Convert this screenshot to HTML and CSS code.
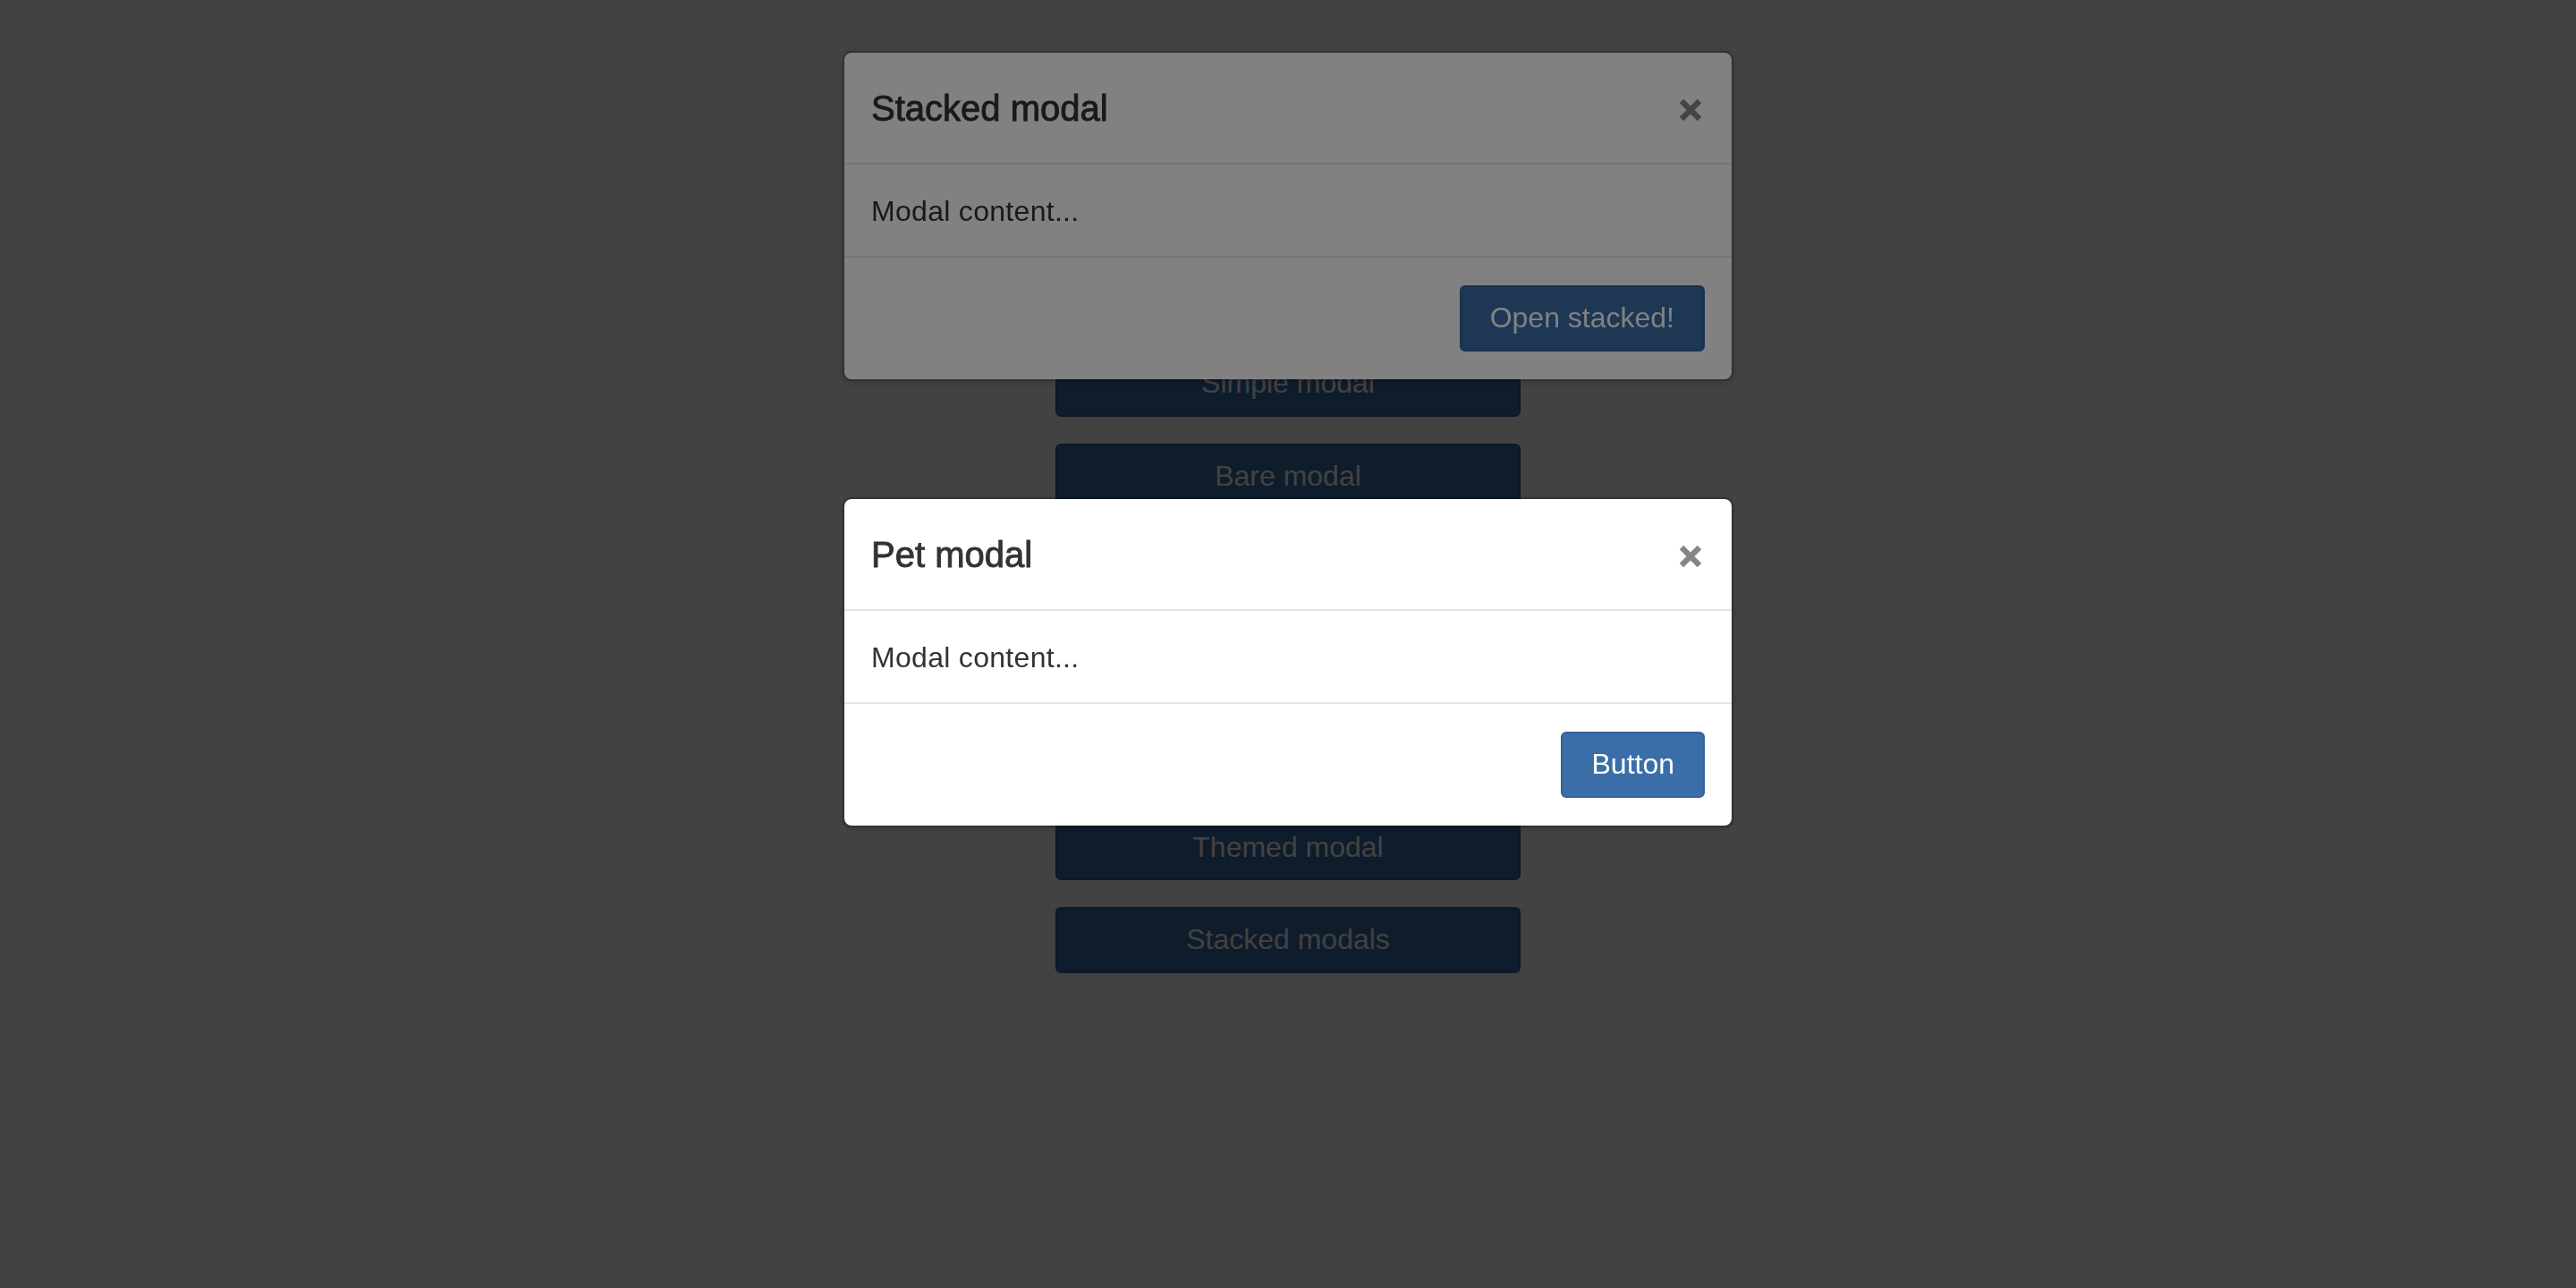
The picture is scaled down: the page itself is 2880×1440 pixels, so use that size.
FILE: index.html
```html
<!DOCTYPE html>
<html lang="en">
<head>
<meta charset="utf-8">
<title>Modals demo</title>
<link rel="stylesheet" href="styles.css">
</head>
<body>
<main class="page">
  <div class="demo-list">
    <button class="btn btn-primary btn-block">Basic modal</button>
    <button class="btn btn-primary btn-block">Large modal</button>
    <button class="btn btn-primary btn-block">Small modal</button>
    <button class="btn btn-primary btn-block">Simple modal</button>
    <button class="btn btn-primary btn-block">Bare modal</button>
    <button class="btn btn-primary btn-block">Pet modal</button>
    <button class="btn btn-primary btn-block">Draggable modal</button>
    <button class="btn btn-primary btn-block">Scrollable modal</button>
    <button class="btn btn-primary btn-block">Themed modal</button>
    <button class="btn btn-primary btn-block">Stacked modals</button>
  </div>
</main>

<div class="backdrop"></div>
<div class="modal modal-first">
  <div class="modal-content">
    <div class="modal-header">
      <h4 class="modal-title">Stacked modal</h4>
      <button class="close" aria-label="Close">
        <svg viewBox="0 0 26 26" width="26" height="26"><path d="M3 3L23 23M23 3L3 23"/></svg>
      </button>
    </div>
    <div class="modal-body">Modal content...</div>
    <div class="modal-footer"><button class="btn btn-primary">Open stacked!</button></div>
  </div>
</div>

<div class="backdrop"></div>
<div class="modal modal-second">
  <div class="modal-content">
    <div class="modal-header">
      <h4 class="modal-title">Pet modal</h4>
      <button class="close" aria-label="Close">
        <svg viewBox="0 0 26 26" width="26" height="26"><path d="M3 3L23 23M23 3L3 23"/></svg>
      </button>
    </div>
    <div class="modal-body">Modal content...</div>
    <div class="modal-footer"><button class="btn btn-primary">Button</button></div>
  </div>
</div>
</body>
</html>
```
FILE: styles.css
```css
* { box-sizing: border-box; }

html, body {
  margin: 0;
  padding: 0;
  height: 100%;
}

body {
  background: #ffffff;
  color: #333333;
  font-family: "Liberation Sans", Arial, sans-serif;
  font-size: 32px;
  line-height: 1.42857;
}

.page {
  padding-top: 81px;
}

.demo-list {
  width: 520px;
  margin: 0 auto;
  display: flex;
  flex-direction: column;
  gap: 30px;
}

.btn {
  font-family: "Liberation Sans", Arial, sans-serif;
  font-size: 32px;
  line-height: 1.42857;
  padding: 12px 32px;
  border: 2px solid transparent;
  border-radius: 6px;
  cursor: pointer;
  text-align: center;
}

.btn-primary {
  background: #3b6ea8;
  border-color: #35639a;
  color: #ffffff;
}

.btn-block {
  display: block;
  width: 100%;
}

.backdrop {
  position: fixed;
  inset: 0;
  background: rgba(0, 0, 0, 0.495);
}

.modal {
  position: fixed;
  inset: 0;
  display: flex;
  justify-content: center;
  align-items: flex-start;
}

.modal-first { padding-top: 57px; }
.modal-second { padding-top: 556px; }

.modal-content {
  width: 996px;
  background: #ffffff;
  background-clip: padding-box;
  border: 2px solid rgba(0, 0, 0, 0.2);
  border-radius: 10px;
  box-shadow: 0 2px 6px rgba(0, 0, 0, 0.15);
}

.modal-header {
  display: flex;
  justify-content: space-between;
  align-items: flex-start;
  padding: 31px 30px 29px;
  border-bottom: 2px solid #e5e5e5;
}

.modal-title {
  margin: 0;
  font-size: 40px;
  line-height: 63px;
  font-weight: 500;
  color: #333333;
  -webkit-text-stroke: 0.9px #333333;
}

.close {
  margin: 20px 3px 0 0;
  padding: 0;
  border: 0;
  background: transparent;
  display: flex;
  cursor: pointer;
}

.close svg path {
  stroke: #868686;
  stroke-width: 6.4;
  fill: none;
}

.modal-body {
  padding: 30px 30px 28px;
  line-height: 44px;
  letter-spacing: 0.3px;
  color: #333333;
}

.modal-footer {
  display: flex;
  justify-content: flex-end;
  padding: 31px 30px 31px;
  border-top: 2px solid #e5e5e5;
}
```
